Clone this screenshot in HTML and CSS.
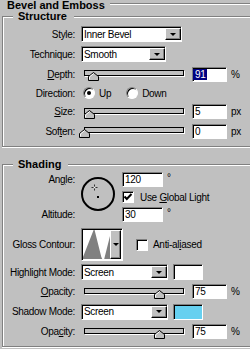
FILE: index.html
```html
<!DOCTYPE html>
<html>
<head>
<meta charset="utf-8">
<link rel="stylesheet" href="styles.css">
</head>
<body>
<div class="title-row"><span class="title">Bevel and Emboss</span><span class="etch"></span></div>

<section class="group g-structure">
  <div class="legend">Structure</div>
  <div class="row r-style">
    <span class="lbl">Style:</span>
    <div class="select sunken w-style"><span class="val">Inner Bevel</span><span class="drop"></span></div>
  </div>
  <div class="row r-tech">
    <span class="lbl">Technique:</span>
    <div class="select sunken w-tech"><span class="val">Smooth</span><span class="drop"></span></div>
  </div>
  <div class="row r-depth">
    <span class="lbl"><u>D</u>epth:</span>
    <div class="slider"><div class="track"></div><svg class="thumb" style="left:calc(9% - 5px)" width="11" height="9" viewBox="0 0 11 9"><path d="M0.5 8.5V4.5L5.5 0.5L10.5 4.5V8.5Z" fill="#c0c0c0" stroke="#000"/><path d="M1.5 7.5V4.9L5.5 1.7" stroke="#fff" fill="none"/></svg></div>
    <div class="num sunken sel-field"><span class="sel">91</span></div><span class="unit">%</span>
  </div>
  <div class="row r-dir">
    <span class="lbl">Direction:</span>
    <span class="radio on"></span><span class="opt">Up</span>
    <span class="radio r-down"></span><span class="opt">Down</span>
  </div>
  <div class="row r-size">
    <span class="lbl"><u>S</u>ize:</span>
    <div class="slider"><div class="track"></div><svg class="thumb" style="left:calc(5% - 5px)" width="11" height="9" viewBox="0 0 11 9"><path d="M0.5 8.5V4.5L5.5 0.5L10.5 4.5V8.5Z" fill="#c0c0c0" stroke="#000"/><path d="M1.5 7.5V4.9L5.5 1.7" stroke="#fff" fill="none"/></svg></div>
    <div class="num sunken">5</div><span class="unit">px</span>
  </div>
  <div class="row r-soft">
    <span class="lbl">Sof<u>t</u>en:</span>
    <div class="slider"><div class="track"></div><svg class="thumb" style="left:calc(0% - 5px)" width="11" height="9" viewBox="0 0 11 9"><path d="M0.5 8.5V4.5L5.5 0.5L10.5 4.5V8.5Z" fill="#c0c0c0" stroke="#000"/><path d="M1.5 7.5V4.9L5.5 1.7" stroke="#fff" fill="none"/></svg></div>
    <div class="num sunken">0</div><span class="unit">px</span>
  </div>
</section>

<section class="group g-shading">
  <div class="legend">Shading</div>
  <div class="angle">
    <span class="lbl a-lbl">An<u>g</u>le:</span>
    <svg class="dial" width="34" height="34" viewBox="0 0 34 34">
      <circle cx="17" cy="17" r="16" fill="none" stroke="#000" stroke-width="2"/>
      <path d="M10.5 10.5h2M14.5 10.5h2M13.5 7.5v2M13.5 11.5v2" stroke="#303030" stroke-width="1"/>
      <rect x="13" y="10" width="1" height="1" fill="#fff"/>
      <rect x="16" y="19" width="2" height="2" fill="#000"/>
    </svg>
    <div class="fld a-in"><div class="num sunken w-ang">120</div><span class="deg">°</span></div>
    <div class="chk-row"><span class="check sunken"><svg width="10" height="10" viewBox="0 0 10 10"><path d="M1.5 4.5L3.8 7L8.5 2" stroke="#000" stroke-width="2" fill="none"/></svg></span><span class="ctext">Use <u>G</u>lobal Light</span></div>
    <span class="lbl b-lbl">Altitude:</span>
    <div class="fld b-in"><div class="num sunken w-ang">30</div><span class="deg">°</span></div>
  </div>
  <div class="row r-gloss">
    <span class="lbl">Gloss Contour:</span>
    <div class="contour sunken">
      <svg class="curve" viewBox="0 0 28 29" preserveAspectRatio="none"><polygon points="0,29 0,27 11,0 12,0 19,27 20,29 22,29 28,6 28,29" fill="#808080"/></svg>
      <span class="drop"></span>
    </div>
    <span class="check sunken aa"></span><span class="ctext">Anti-al<u>i</u>ased</span>
  </div>
  <div class="row r-hmode">
    <span class="lbl">Highlight Mode:</span>
    <div class="select sunken w-mode"><span class="val">Screen</span><span class="drop"></span></div>
    <span class="swatch sunken sw-white"></span>
  </div>
  <div class="row r-op">
    <span class="lbl"><u>O</u>pacity:</span>
    <div class="slider"><div class="track"></div><svg class="thumb" style="left:calc(75% - 5px)" width="11" height="9" viewBox="0 0 11 9"><path d="M0.5 8.5V4.5L5.5 0.5L10.5 4.5V8.5Z" fill="#c0c0c0" stroke="#000"/><path d="M1.5 7.5V4.9L5.5 1.7" stroke="#fff" fill="none"/></svg></div>
    <div class="num sunken">75</div><span class="unit">%</span>
  </div>
  <div class="row r-smode">
    <span class="lbl">Shadow Mode:</span>
    <div class="select sunken w-mode"><span class="val">Screen</span><span class="drop"></span></div>
    <span class="swatch sunken sw-blue"></span>
  </div>
  <div class="row r-op">
    <span class="lbl">Opa<u>c</u>ity:</span>
    <div class="slider"><div class="track"></div><svg class="thumb" style="left:calc(75% - 5px)" width="11" height="9" viewBox="0 0 11 9"><path d="M0.5 8.5V4.5L5.5 0.5L10.5 4.5V8.5Z" fill="#c0c0c0" stroke="#000"/><path d="M1.5 7.5V4.9L5.5 1.7" stroke="#fff" fill="none"/></svg></div>
    <div class="num sunken">75</div><span class="unit">%</span>
  </div>
</section>
</body>
</html>
```
FILE: styles.css
```css
* { box-sizing: border-box; }
html, body { margin: 0; padding: 0; }
body {
  width: 250px;
  height: 349px;
  overflow: hidden;
  background: #c0c0c0;
  color: #000;
  font-family: "Liberation Sans", Arial, sans-serif;
  font-size: 10px;
  letter-spacing: -0.3px;
  line-height: 13px;
}
u { text-decoration: underline; text-underline-offset: 1px; }

.title-row {
  display: flex;
  align-items: center;
  height: 14px;
  margin-top: -3px;
  padding-left: 7px;
}
.title {
  margin-top: 2px;
  font-weight: bold;
  font-size: 11px;
  letter-spacing: 0;
  line-height: 14px;
  white-space: nowrap;
}
.etch {
  flex: 1;
  height: 2px;
  margin-left: 5px;
  border-top: 1px solid #808080;
  border-bottom: 1px solid #fff;
}

.group {
  width: 248px;
  margin-left: 2px;
  border: 1px solid #808080;
  border-right: none;
  box-shadow: inset 1px 1px 0 #fff, 0 1px 0 #fff;
  padding-bottom: 6px;
}
.g-structure { margin-top: 5px; }
.g-shading { margin-top: 17px; }
.legend {
  width: max-content;
  margin: -7px 0 0 10px;
  padding: 0 7px 0 5px;
  background: #c0c0c0;
  font-weight: bold;
  font-size: 11px;
  letter-spacing: 0;
  line-height: 13px;
}

.row { display: flex; align-items: center; }
.lbl {
  flex: none;
  width: 72px;
  margin-right: 6px;
  text-align: right;
  white-space: nowrap;
}
.r-style { height: 22px; }
.r-tech { height: 18px; }
.r-depth { height: 22px; }
.r-dir { height: 16px; }
.r-size { height: 21px; }
.r-soft { height: 18px; }
.r-gloss { height: 33px; margin-top: 6px; }
.r-hmode { height: 22px; }
.r-op { height: 17px; }
.r-smode { height: 23px; }

.sunken {
  background: #fff;
  border: 1px solid;
  border-color: #808080 #fff #fff #808080;
  box-shadow: inset 1px 1px 0 #000;
}

.select {
  flex: none;
  display: flex;
  align-items: center;
  height: 16px;
  padding: 1px 0 1px 2px;
}
.select .val { flex: 1; white-space: nowrap; overflow: hidden; }
.w-style { width: 101px; }
.w-tech { width: 85px; }
.w-mode { width: 87px; }
.drop {
  flex: none;
  display: flex;
  align-items: center;
  justify-content: center;
  width: 16px;
  height: 12px;
  background: #c0c0c0;
  border: 1px solid;
  border-color: #fff #000 #000 #fff;
  box-shadow: inset -1px -1px 0 #808080;
}
.drop::after {
  content: "";
  border-left: 3px solid transparent;
  border-right: 3px solid transparent;
  border-top: 3px solid #000;
}

.slider {
  position: relative;
  flex: none;
  width: 100px;
  height: 14px;
  margin-left: 3px;
  margin-right: 8px;
}
.track {
  margin-top: 3px;
  height: 6px;
  border: 1px solid #000;
  background: #c0c0c0;
  box-shadow: 1px 1px 0 #fff;
}
.thumb { position: absolute; top: 5px; }

.num {
  flex: none;
  display: flex;
  align-items: center;
  width: 35px;
  height: 15px;
  padding-left: 2px;
  line-height: 13px;
}
.sel-field { padding-left: 0; }
.sel {
  background: #000080;
  color: #fff;
  padding: 0 1px 0 2px;
  line-height: 11px;
}
.unit { margin-left: 4px; }

.radio {
  flex: none;
  display: flex;
  align-items: center;
  justify-content: center;
  width: 12px;
  height: 12px;
  margin-left: 2px;
  border-radius: 50%;
  background: #fff;
  border: 1px solid;
  border-color: #808080 #fff #fff #808080;
  box-shadow: inset 1px 1px 0 #000;
}
.radio.on::after {
  content: "";
  width: 4px;
  height: 4px;
  border-radius: 50%;
  background: #000;
}
.r-down { margin-left: 15px; }
.opt { margin-left: 4px; }

.angle {
  display: grid;
  grid-template-columns: 78px 41px 1fr;
  grid-template-rows: 15px 12px 15px;
  row-gap: 4px;
  margin-top: 1px;
}
.a-lbl { grid-column: 1; grid-row: 1; align-self: center; }
.b-lbl { grid-column: 1; grid-row: 3; align-self: center; }
.dial { grid-column: 2; grid-row: 1 / 4; margin-top: 5px; }
.fld { display: flex; align-items: flex-start; }
.a-in { grid-column: 3; grid-row: 1; }
.b-in { grid-column: 3; grid-row: 3; }
.w-ang { width: 41px; }
.deg { margin-left: 4px; line-height: 11px; }
.chk-row { grid-column: 3; grid-row: 2; display: flex; align-items: center; }

.check {
  flex: none;
  display: flex;
  align-items: center;
  justify-content: center;
  width: 12px;
  height: 12px;
}
.ctext { margin-left: 6px; white-space: nowrap; }
.aa { margin-left: 13px; }
.r-gloss .ctext { margin-left: 5px; }

.contour {
  flex: none;
  display: flex;
  width: 42px;
  height: 33px;
  padding: 1px;
}
.curve { flex: 1; height: 100%; display: block; }
.contour .drop { width: 11px; height: auto; align-self: stretch; }

.swatch {
  flex: none;
  width: 30px;
  height: 16px;
  margin-left: 5px;
}
.sw-white { background: #fff; }
.sw-blue { background: #66d0f0; }
```
